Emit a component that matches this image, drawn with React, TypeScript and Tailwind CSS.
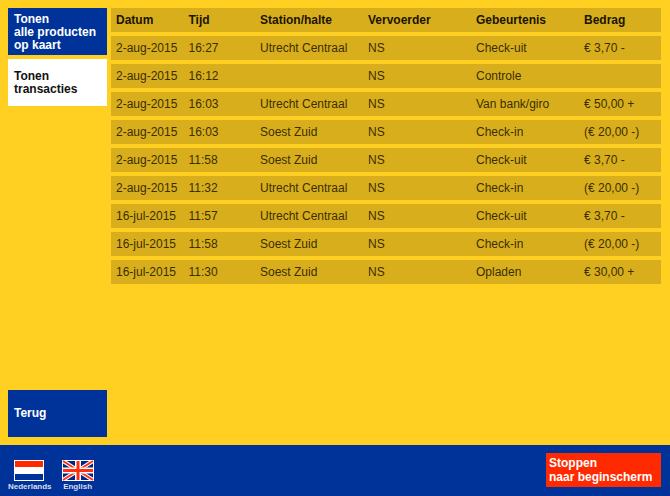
const headers = ["Datum", "Tijd", "Station/halte", "Vervoerder", "Gebeurtenis", "Bedrag"];

const rows = [
  ["2-aug-2015", "16:27", "Utrecht Centraal", "NS", "Check-uit", "€ 3,70 -"],
  ["2-aug-2015", "16:12", "", "NS", "Controle", ""],
  ["2-aug-2015", "16:03", "Utrecht Centraal", "NS", "Van bank/giro", "€ 50,00 +"],
  ["2-aug-2015", "16:03", "Soest Zuid", "NS", "Check-in", "(€ 20,00 -)"],
  ["2-aug-2015", "11:58", "Soest Zuid", "NS", "Check-uit", "€ 3,70 -"],
  ["2-aug-2015", "11:32", "Utrecht Centraal", "NS", "Check-in", "(€ 20,00 -)"],
  ["16-jul-2015", "11:57", "Utrecht Centraal", "NS", "Check-uit", "€ 3,70 -"],
  ["16-jul-2015", "11:58", "Soest Zuid", "NS", "Check-in", "(€ 20,00 -)"],
  ["16-jul-2015", "11:30", "Soest Zuid", "NS", "Opladen", "€ 30,00 +"],
];

const rowClass =
  "grid h-6 grid-cols-[72.5px_71.5px_108px_108px_108px_82px] items-center bg-[#d9ae1c] pl-[5px]";

function FlagNL() {
  return (
    <div className="-ml-px flex h-[21px] w-[30px] flex-col border border-white">
      <div className="flex-1 bg-[#ff2a00]" />
      <div className="flex-1 bg-white" />
      <div className="flex-1 bg-[#003399]" />
    </div>
  );
}

function FlagUK() {
  return (
    <svg width="32" height="21" viewBox="0 0 32 21" className="block">
      <rect width="32" height="21" fill="#fff" />
      <rect x="1" y="1" width="30" height="19" fill="#00248a" />
      <path d="M1 1L31 20M31 1L1 20" stroke="#fff" strokeWidth="4" />
      <path d="M1 1L31 20M31 1L1 20" stroke="#ff3010" strokeWidth="2" />
      <path d="M16 1V20M1 10.5H31" stroke="#fff" strokeWidth="6" />
      <path d="M16 1V20M1 10.5H31" stroke="#ff3010" strokeWidth="3" />
    </svg>
  );
}

export default function App() {
  return (
    <div className="flex h-[496px] w-[670px] flex-col overflow-hidden bg-[#ffcf21] font-['Liberation_Sans',Arial,sans-serif] text-xs text-[#3a2e00]">
      <div className="flex h-[445px] gap-1 p-2">
        {/* Side buttons */}
        <div className="flex w-[99px] flex-col gap-1">
          <div className="flex h-[47px] items-center bg-[#003399] px-[6px] pt-[2px] font-bold leading-[13px] text-white">
            <div>
              Tonen
              <br />
              alle producten
              <br />
              op kaart
            </div>
          </div>
          <div className="flex h-[47px] items-center bg-white px-[6px] font-bold leading-[13px] text-[#111]">
            <div>
              Tonen
              <br />
              transacties
            </div>
          </div>
          <div className="mt-auto flex h-[47px] items-center bg-[#003399] px-[6px] pb-[2px] font-bold text-white">
            Terug
          </div>
        </div>

        {/* Transactions */}
        <div className="flex w-[550px] flex-col gap-1">
          <div className={`${rowClass} font-bold text-[#1a1400]`}>
            {headers.map((h) => (
              <div key={h}>{h}</div>
            ))}
          </div>
          {rows.map((r, i) => (
            <div key={i} className={rowClass}>
              {r.map((c, j) => (
                <div key={j} className="whitespace-nowrap">
                  {c}
                </div>
              ))}
            </div>
          ))}
        </div>
      </div>

      {/* Footer */}
      <div className="flex h-[51px] items-start justify-between bg-[#003399] pt-2 pr-[9px] pl-2">
        <div className="flex gap-[10px] pt-[7px] text-[8px] leading-[9px] font-bold text-[#dde]">
          <div className="flex flex-col items-center gap-[1px]">
            <FlagNL />
            <div>Nederlands</div>
          </div>
          <div className="flex flex-col items-center gap-[1px]">
            <FlagUK />
            <div>English</div>
          </div>
        </div>
        <div className="flex h-[34px] w-[115px] items-center bg-[#ff2a00] px-[3px] leading-[14px] font-bold text-white">
          <div>
            Stoppen
            <br />
            naar beginscherm
          </div>
        </div>
      </div>
    </div>
  );
}
